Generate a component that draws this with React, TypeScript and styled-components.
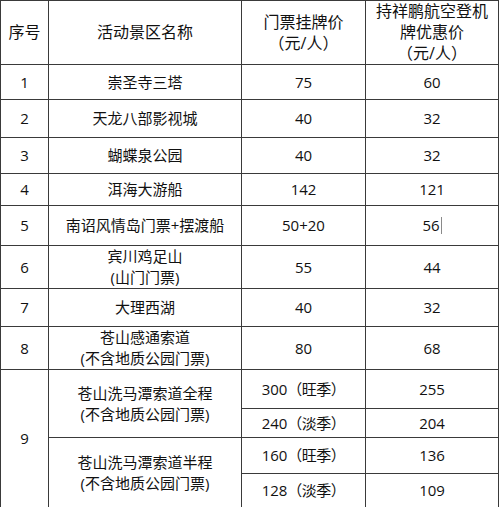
import styled, { createGlobalStyle } from "styled-components";

const GlobalStyle = createGlobalStyle`
    html, body {
        margin: 0;
        padding: 0;
        background: #ffffff;
    }
`;

type Row = {
    no: string;
    name: string[];
    price: string;
    discount: string;
    height: number;
    cursor?: boolean;
};

const rows: Row[] = [
    { no: "1", name: ["崇圣寺三塔"], price: "75", discount: "60", height: 35 },
    { no: "2", name: ["天龙八部影视城"], price: "40", discount: "32", height: 38 },
    { no: "3", name: ["蝴蝶泉公园"], price: "40", discount: "32", height: 36 },
    { no: "4", name: ["洱海大游船"], price: "142", discount: "121", height: 32 },
    { no: "5", name: ["南诏风情岛门票+摆渡船"], price: "50+20", discount: "56", height: 40, cursor: true },
    { no: "6", name: ["宾川鸡足山", "(山门门票)"], price: "55", discount: "44", height: 43 },
    { no: "7", name: ["大理西湖"], price: "40", discount: "32", height: 38 },
    { no: "8", name: ["苍山感通索道", "(不含地质公园门票)"], price: "80", discount: "68", height: 42 },
];

const cableRows = [
    { name: ["苍山洗马潭索道全程", "(不含地质公园门票)"], seasons: [["300", "（旺季）", "255", 39], ["240", "（淡季）", "204", 29]] },
    { name: ["苍山洗马潭索道半程", "(不含地质公园门票)"], seasons: [["160", "（旺季）", "136", 36], ["128", "（淡季）", "109", 34]] },
] as const;

function Lines({ lines }: { lines: readonly string[] }) {
    return (
        <>
            {lines.map((l, i) => (
                <Line key={i}>{l}</Line>
            ))}
        </>
    );
}

export default function App() {
    return (
        <Page>
            <GlobalStyle />
            <Table>
                <colgroup>
                    <col style={{ width: 48 }} />
                    <col style={{ width: 193 }} />
                    <col style={{ width: 124 }} />
                    <col style={{ width: 133 }} />
                </colgroup>
                <thead>
                    <TRow $h={64}>
                        <HeadCell>序号</HeadCell>
                        <HeadCell>活动景区名称</HeadCell>
                        <HeadCell>
                            <Lines lines={["门票挂牌价", "（元/人）"]} />
                        </HeadCell>
                        <HeadCell>
                            <Lines lines={["持祥鹏航空登机", "牌优惠价", "（元/人）"]} />
                        </HeadCell>
                    </TRow>
                </thead>
                <tbody>
                    {rows.map(r => (
                        <TRow key={r.no} $h={r.height}>
                            <Cell>{r.no}</Cell>
                            <Cell>
                                <Lines lines={r.name} />
                            </Cell>
                            <Cell>{r.price}</Cell>
                            <Cell>
                                {r.discount}
                                {r.cursor && <Caret />}
                            </Cell>
                        </TRow>
                    ))}
                    {cableRows.map((group, gi) =>
                        group.seasons.map(([price, season, discount, h], si) => (
                            <TRow key={`${gi}-${si}`} $h={h}>
                                {gi === 0 && si === 0 && <Cell rowSpan={4}>9</Cell>}
                                {si === 0 && (
                                    <Cell rowSpan={2}>
                                        <Lines lines={group.name} />
                                    </Cell>
                                )}
                                <Cell>
                                    {price}
                                    <Season>{season}</Season>
                                </Cell>
                                <Cell>{discount}</Cell>
                            </TRow>
                        ))
                    )}
                </tbody>
            </Table>
        </Page>
    );
}

const Page = styled.div`
    width: 500px;
    height: 507px;
    background: #ffffff;
    font-family: "Open Sans", "Noto Sans CJK SC", sans-serif;
    color: #111111;
`;

const Table = styled.table`
    width: 498px;
    table-layout: fixed;
    border-collapse: collapse;
`;

const TRow = styled.tr<{ $h: number }>`
    height: ${p => p.$h}px;
`;

const HeadCell = styled.th`
    border: 1px solid #3a3a3a;
    padding: 0;
    font-weight: 400;
    font-size: 16px;
    line-height: 21px;
    text-align: center;
    vertical-align: middle;
`;

const Cell = styled.td`
    border: 1px solid #3a3a3a;
    padding: 0;
    font-size: 15px;
    line-height: 21px;
    text-align: center;
    vertical-align: middle;
`;

const Line = styled.div`
    white-space: nowrap;
`;

const Season = styled.span`
    letter-spacing: -0.5px;
`;

const Caret = styled.span`
    display: inline-block;
    width: 1px;
    height: 17px;
    margin-left: 1px;
    vertical-align: -3px;
    background: #8a8a8a;
`;
